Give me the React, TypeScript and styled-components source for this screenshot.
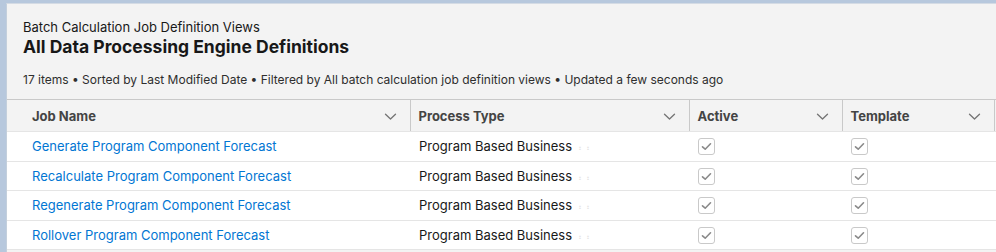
import React from 'react';
import styled, { createGlobalStyle } from 'styled-components';

const GlobalStyle = createGlobalStyle`
  html, body {
    margin: 0;
    padding: 0;
    background: #b7c8dd;
  }
  body {
    font-family: "Inter", "Liberation Sans", Arial, sans-serif;
    color: #181818;
  }
`;

interface Job {
  name: string;
  processType: string;
  active: boolean;
  template: boolean;
}

const jobs: Job[] = [
  { name: 'Generate Program Component Forecast', processType: 'Program Based Business', active: true, template: true },
  { name: 'Recalculate Program Component Forecast', processType: 'Program Based Business', active: true, template: true },
  { name: 'Regenerate Program Component Forecast', processType: 'Program Based Business', active: true, template: true },
  { name: 'Rollover Program Component Forecast', processType: 'Program Based Business', active: true, template: true },
];

const columns = [
  { label: 'Job Name', width: 403 },
  { label: 'Process Type', width: 279 },
  { label: 'Active', width: 153 },
  { label: 'Template', width: 152 },
];

const Chevron = () => (
  <svg width="13" height="13" viewBox="0 0 13 13" fill="none">
    <path d="M1.5 4.2 L6.5 9 L11.5 4.2" stroke="#747474" strokeWidth="1.3" strokeLinecap="round" strokeLinejoin="round" />
  </svg>
);

const Checkbox = () => (
  <CheckBoxFrame>
    <svg width="11" height="9" viewBox="0 0 11 9" fill="none">
      <path d="M1.5 4.8 L4.2 7.2 L9.5 1.8" stroke="#8a8a8a" strokeWidth="1.6" strokeLinecap="round" strokeLinejoin="round" />
    </svg>
  </CheckBoxFrame>
);

const App = () => {
  return (
    <>
      <GlobalStyle />
      <Frame>
        <Card>
          <ListHeader>
            <ObjectLabel>Batch Calculation Job Definition Views</ObjectLabel>
            <ViewTitle>All Data Processing Engine Definitions</ViewTitle>
            <Meta>
              17 items • Sorted by Last Modified Date • Filtered by All batch calculation job definition views • Updated a few seconds ago
            </Meta>
          </ListHeader>
          <Table>
            <colgroup>
              {columns.map((c) => (
                <col key={c.label} style={{ width: c.width }} />
              ))}
              <col />
            </colgroup>
            <thead>
              <tr>
                {columns.map((c) => (
                  <HeadCell key={c.label}>
                    <HeadInner>
                      <span>{c.label}</span>
                      <Chevron />
                    </HeadInner>
                  </HeadCell>
                ))}
                <FillerHead />
              </tr>
            </thead>
            <tbody>
              {jobs.map((job) => (
                <Row key={job.name}>
                  <Cell>
                    <JobLink href="#">{job.name}</JobLink>
                  </Cell>
                  <Cell $pad={9}>
                    {job.processType}
                    <EditHint>⠆⠆</EditHint>
                  </Cell>
                  <Cell $pad={9}>{job.active && <Checkbox />}</Cell>
                  <Cell $pad={9}>{job.template && <Checkbox />}</Cell>
                  <Cell />
                </Row>
              ))}
            </tbody>
          </Table>
        </Card>
      </Frame>
    </>
  );
};

const Frame = styled.div`
  padding: 3px 0 0 6px;
  height: 249px;
  overflow: hidden;
`;

const Card = styled.div`
  background: #f3f3f3;
  border-left: 1px solid #c3cfdc;
  border-top: 1px solid #d4dbe4;
  height: 100%;
`;

const ListHeader = styled.div`
  padding: 14px 16px 0 16px;
  height: 95px;
  box-sizing: border-box;
`;

const ObjectLabel = styled.div`
  font-size: 13px;
  line-height: 18px;
  color: #181818;
`;

const ViewTitle = styled.h1`
  margin: 0;
  font-size: 17.5px;
  line-height: 22px;
  font-weight: 700;
  color: #181818;
`;

const Meta = styled.div`
  margin-top: 14px;
  font-size: 12px;
  line-height: 16px;
  color: #2e2e2e;
`;

const Table = styled.table`
  width: 100%;
  border-collapse: collapse;
  table-layout: fixed;
  border-top: 1px solid #c9c9c9;
  background: #fff;
`;

const HeadCell = styled.th`
  height: 31px;
  padding: 0 0 0 25px;
  background: #f3f3f3;
  border-right: 1px solid #c9c9c9;
  border-bottom: 1px solid #e5e5e5;
  text-align: left;
  font-size: 13px;
  font-weight: 700;
  color: #444;
  & + & {
    padding-left: 8px;
  }
`;

const FillerHead = styled.th`
  background: #f3f3f3;
  border-bottom: 1px solid #e5e5e5;
`;

const HeadInner = styled.div`
  display: flex;
  align-items: center;
  justify-content: space-between;
  padding-right: 13px;
  svg {
    margin-top: 1px;
  }
`;

const Row = styled.tr`
  border-bottom: 1px solid #e5e5e5;
`;

const Cell = styled.td<{ $pad?: number }>`
  height: 28.5px;
  padding: 0 0 0 ${(p) => p.$pad ?? 25}px;
  font-size: 13px;
  color: #181818;
  white-space: nowrap;
  overflow: hidden;
`;

const JobLink = styled.a`
  color: #0176d3;
  text-decoration: none;
`;

const EditHint = styled.span`
  margin-left: 6px;
  font-size: 9px;
  color: #e4e4e4;
  letter-spacing: 1px;
`;

const CheckBoxFrame = styled.span`
  display: inline-flex;
  align-items: center;
  justify-content: center;
  width: 15px;
  height: 15px;
  border: 1px solid #c9c9c9;
  border-radius: 3px;
  background: #fff;
  vertical-align: middle;
`;

export default App;
